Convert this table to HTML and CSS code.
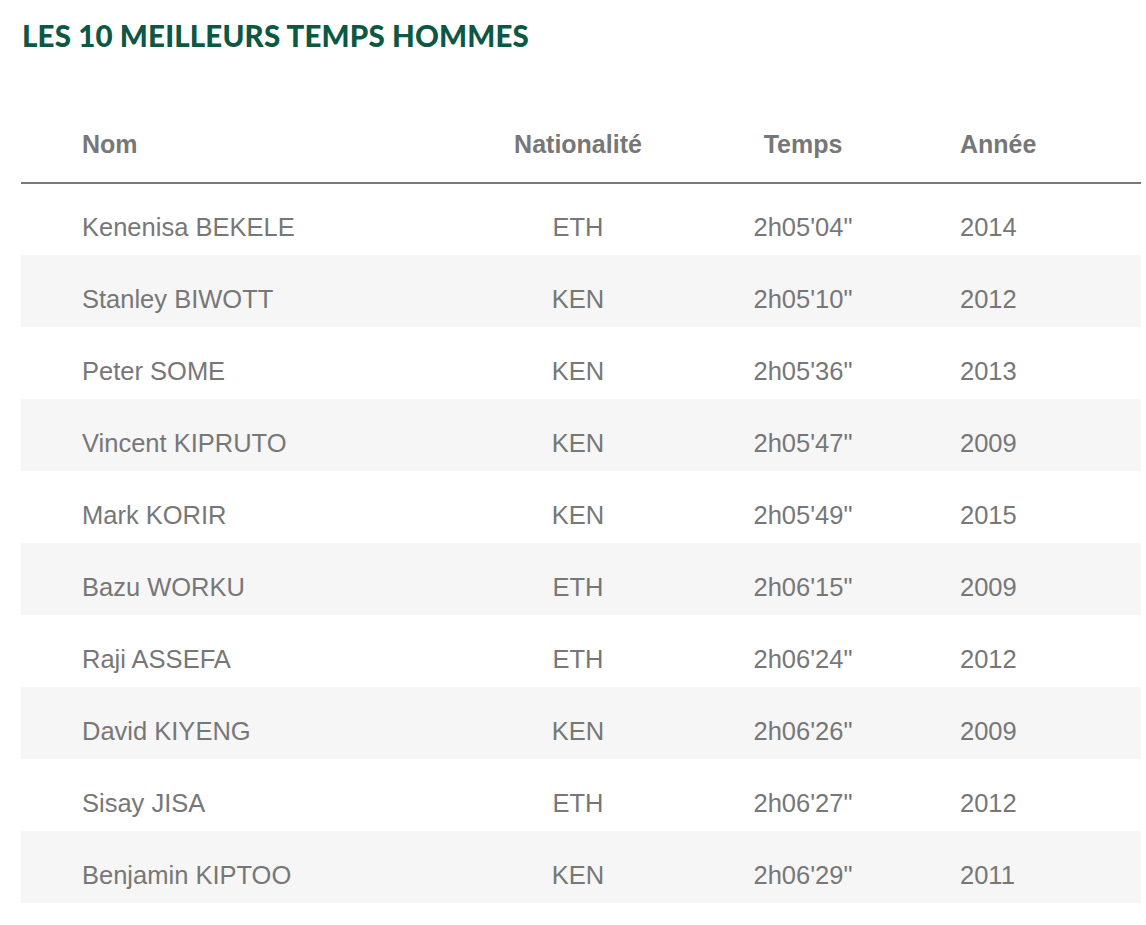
FILE: index.html
```html
<!DOCTYPE html>
<html lang="fr">
<head>
<meta charset="utf-8">
<title>Les 10 meilleurs temps hommes</title>
<link rel="stylesheet" href="styles.css">
</head>
<body>
<main class="page">
  <h2 class="title">LES 10 MEILLEURS TEMPS HOMMES</h2>
  <table class="records">
    <colgroup>
      <col class="c-name"><col class="c-nat"><col class="c-time"><col class="c-year">
    </colgroup>
    <thead>
      <tr><th class="name">Nom</th><th class="nat">Nationalité</th><th class="time">Temps</th><th class="year">Année</th></tr>
    </thead>
    <tbody>
      <tr><td class="name">Kenenisa BEKELE</td><td class="nat">ETH</td><td class="time">2h05'04"</td><td class="year">2014</td></tr>
      <tr><td class="name">Stanley BIWOTT</td><td class="nat">KEN</td><td class="time">2h05'10"</td><td class="year">2012</td></tr>
      <tr><td class="name">Peter SOME</td><td class="nat">KEN</td><td class="time">2h05'36"</td><td class="year">2013</td></tr>
      <tr><td class="name">Vincent KIPRUTO</td><td class="nat">KEN</td><td class="time">2h05'47"</td><td class="year">2009</td></tr>
      <tr><td class="name">Mark KORIR</td><td class="nat">KEN</td><td class="time">2h05'49"</td><td class="year">2015</td></tr>
      <tr><td class="name">Bazu WORKU</td><td class="nat">ETH</td><td class="time">2h06'15"</td><td class="year">2009</td></tr>
      <tr><td class="name">Raji ASSEFA</td><td class="nat">ETH</td><td class="time">2h06'24"</td><td class="year">2012</td></tr>
      <tr><td class="name">David KIYENG</td><td class="nat">KEN</td><td class="time">2h06'26"</td><td class="year">2009</td></tr>
      <tr><td class="name">Sisay JISA</td><td class="nat">ETH</td><td class="time">2h06'27"</td><td class="year">2012</td></tr>
      <tr><td class="name">Benjamin KIPTOO</td><td class="nat">KEN</td><td class="time">2h06'29"</td><td class="year">2011</td></tr>
    </tbody>
  </table>
</main>
</body>
</html>
```

FILE: styles.css
```css
html, body {
  margin: 0;
  padding: 0;
  background: #ffffff;
}

.page {
  padding: 18px 5px 0 21px;
}

.title {
  margin: 0 0 0 1px;
  font-family: Lato, "Open Sans", sans-serif;
  font-weight: 900;
  font-size: 29.5px;
  line-height: 36px;
  letter-spacing: 0.15px;
  color: #0c5843;
}

.records {
  margin-top: 55px;
  width: 1120px;
  border-collapse: collapse;
  table-layout: fixed;
  font-family: "Liberation Sans", Arial, sans-serif;
  color: #777777;
}

.c-name { width: 432px; }
.c-nat { width: 250px; }
.c-time { width: 200px; }
.c-year { width: 238px; }

.records thead tr { height: 74px; }
.records tbody tr { height: 72px; }

.records th {
  padding: 0 0 3px 0;
  font-size: 25px;
  font-weight: bold;
  border-bottom: 2px solid #7a7a7a;
  vertical-align: middle;
}

.records td {
  padding: 16px 0 0 0;
  font-size: 25.5px;
  vertical-align: middle;
}

.records tbody tr:nth-child(even) td {
  background: #f6f6f6;
}

.records .name { text-align: left; padding-left: 61px; }
.records .nat { text-align: center; }
.records .time { text-align: center; }
.records .year { text-align: left; padding-left: 57px; }
```
